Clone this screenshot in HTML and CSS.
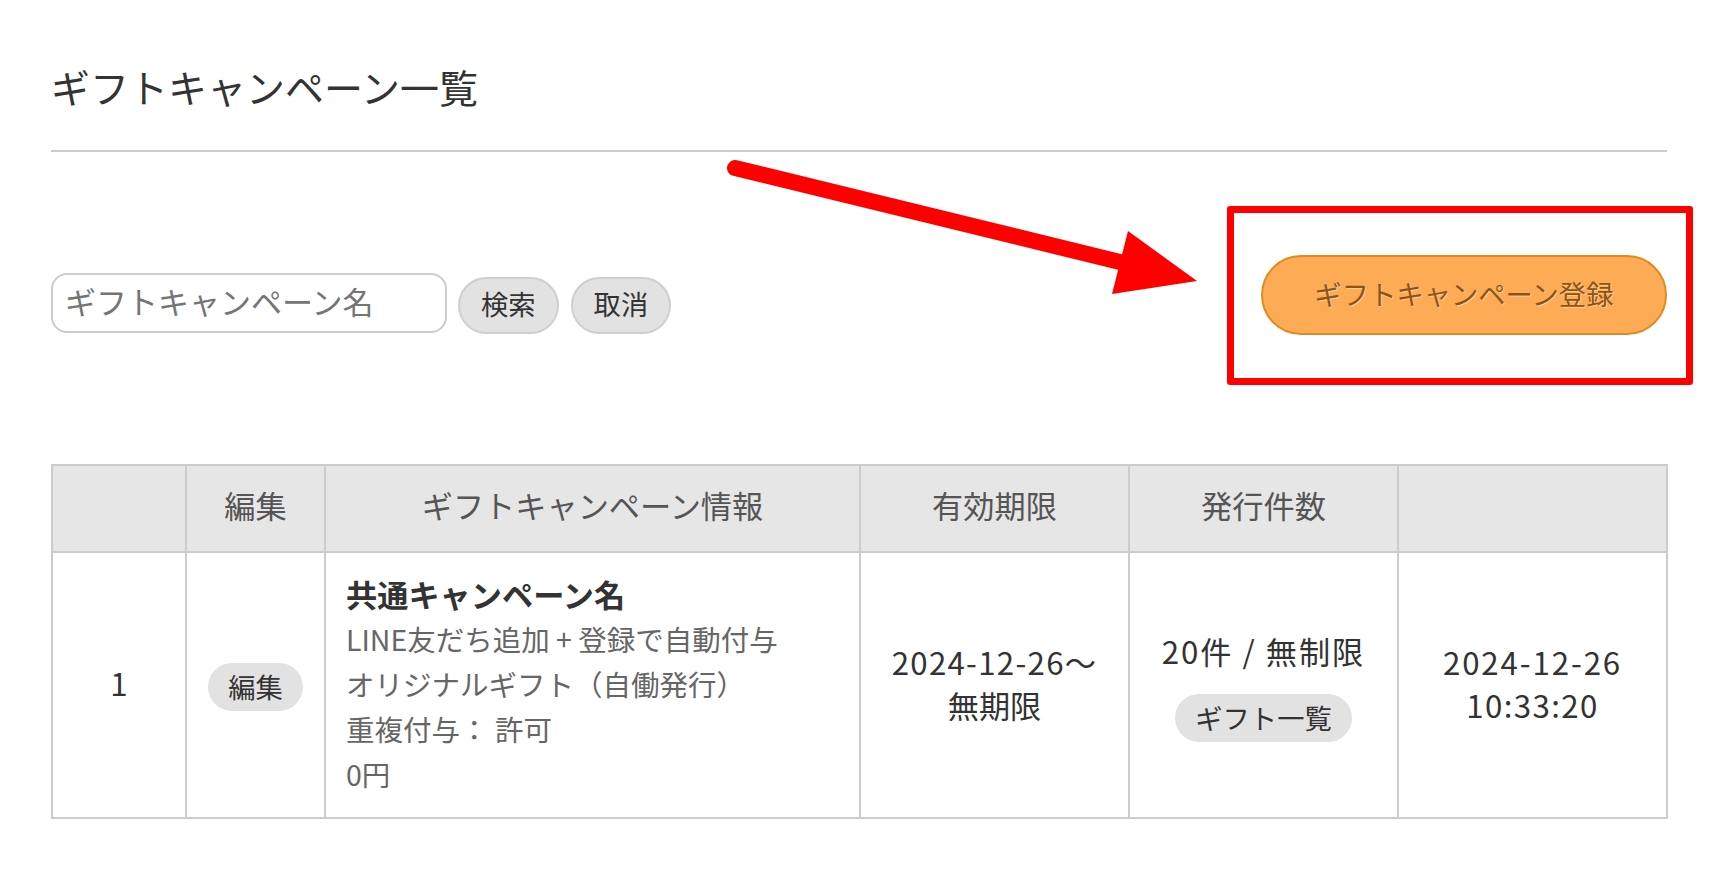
FILE: index.html
```html
<!DOCTYPE html>
<html lang="ja">
<head>
<meta charset="utf-8">
<title>ギフトキャンペーン一覧</title>
<link rel="stylesheet" href="styles.css">
</head>
<body>
<div class="page">
  <h1 class="title">ギフトキャンペーン一覧</h1>
  <div class="toolbar">
    <form class="search">
      <input class="search-input" type="text" placeholder="ギフトキャンペーン名">
      <button class="btn" type="button">検索</button>
      <button class="btn" type="button">取消</button>
    </form>
    <button class="btn-primary" type="button">ギフトキャンペーン登録</button>
  </div>
  <table class="list">
    <colgroup>
      <col class="c-no"><col class="c-edit"><col class="c-info"><col class="c-term"><col class="c-count"><col class="c-date">
    </colgroup>
    <thead>
      <tr>
        <th></th>
        <th>編集</th>
        <th>ギフトキャンペーン情報</th>
        <th>有効期限</th>
        <th>発行件数</th>
        <th></th>
      </tr>
    </thead>
    <tbody>
      <tr>
        <td class="num">1</td>
        <td class="center action-cell"><button class="btn-sm" type="button">編集</button></td>
        <td class="info">
          <div class="info-name">共通キャンペーン名</div>
          <div class="info-line">LINE友だち追加 + 登録で自動付与</div>
          <div class="info-line">オリジナルギフト（自働発行）</div>
          <div class="info-line">重複付与： 許可</div>
          <div class="info-line">0円</div>
        </td>
        <td class="center dark dates"><span class="sp-term">2024-12-26〜</span><br>無期限</td>
        <td class="center dark action-cell">
          <div class="sp-count">20件 / 無制限</div>
          <div class="sub-action"><button class="btn-sm" type="button">ギフト一覧</button></div>
        </td>
        <td class="center dark dates"><span class="sp-date">2024-12-26</span><br><span class="sp-time">10:33:20</span></td>
      </tr>
    </tbody>
  </table>
</div>
<div class="annot-box"></div>
<svg class="annot-arrow" width="490" height="160" viewBox="0 0 490 160">
  <line x1="15" y1="18" x2="400" y2="112" stroke="#ff0000" stroke-width="16" stroke-linecap="round"/>
  <polygon points="408,81 392,144 477,131" fill="#ff0000"/>
</svg>
</body>
</html>
```
FILE: styles.css
```css
html, body {
  margin: 0;
  padding: 0;
  background: #ffffff;
}

body {
  font-family: "Noto Sans CJK JP", "Noto Sans", sans-serif;
  color: #333333;
}

.page {
  padding: 58px 43px 0 51px;
}

.title {
  margin: 0;
  padding: 0 0 36px 0;
  font-size: 39px;
  line-height: 56px;
  font-weight: 400;
  color: #333333;
  border-bottom: 2px solid #cccccc;
}

.toolbar {
  margin-top: 103px;
  display: flex;
  justify-content: space-between;
  align-items: flex-start;
}

.search {
  margin: 18px 0 0 0;
  display: flex;
  align-items: flex-start;
  gap: 11px;
}

.search-input {
  box-sizing: border-box;
  width: 396px;
  height: 60px;
  margin: 0;
  padding: 0 12px 5px 12px;
  border: 2px solid #cccccc;
  border-radius: 16px;
  font-family: "Noto Sans CJK JP", "Noto Sans", sans-serif;
  font-size: 31px;
  color: #333333;
  background: #ffffff;
  outline: none;
}

.search-input::placeholder {
  color: #757575;
}

.btn {
  box-sizing: border-box;
  height: 57px;
  margin: 4px 0 0 0;
  padding: 0 21px 4px 21px;
  border: 2px solid #cfcfcf;
  border-radius: 29px;
  background: #e2e2e2;
  font-family: "Noto Sans CJK JP", "Noto Sans", sans-serif;
  font-size: 27.3px;
  line-height: 49px;
  color: #333333;
}

.search .btn + .btn {
  margin-left: 1px;
}

.btn-primary {
  box-sizing: border-box;
  width: 406px;
  height: 80px;
  margin: 0;
  padding: 0 0 4px 0;
  border: 2px solid #e28a20;
  border-radius: 40px;
  background: #fdab55;
  font-family: "Noto Sans CJK JP", "Noto Sans", sans-serif;
  font-size: 27.3px;
  line-height: 72px;
  color: #8f5411;
  text-shadow: 1px 1px 1px rgba(255, 255, 255, 0.45);
}

.list {
  margin-top: 129px;
  width: 1615px;
  table-layout: fixed;
  border-collapse: collapse;
  border: 2px solid #cccccc;
  font-size: 31.2px;
  line-height: 45px;
}

.c-no { width: 134px; }
.c-edit { width: 139px; }
.c-info { width: 535px; }
.c-term { width: 269px; }
.c-count { width: 269px; }
.c-date { width: 269px; }

.list th {
  height: 77px;
  padding: 0 0 8px 0;
  border: 2px solid #cccccc;
  background: #e6e6e6;
  font-weight: 400;
  color: #555555;
  text-align: center;
  vertical-align: middle;
}

.list td {
  padding: 17px 20px 22px 20px;
  border: 2px solid #cccccc;
  vertical-align: middle;
}

.list td.info {
  padding: 18px 20px 21px 20px;
}

.list td.action-cell {
  padding: 19.5px 20px;
}

.num {
  text-align: center;
  color: #333333;
}

.center {
  text-align: center;
}

.dark {
  color: #333333;
}

.dates {
  line-height: 43px;
}

.sp-term {
  letter-spacing: 1.3px;
}

.sp-date {
  letter-spacing: 1.9px;
}

.sp-time {
  letter-spacing: 1.4px;
}

.sp-count {
  letter-spacing: 2px;
}

.info {
  text-align: left;
}

.info-name {
  font-weight: 700;
  color: #333333;
}

.info-line {
  font-size: 28.5px;
  color: #666666;
}

.btn-sm {
  box-sizing: border-box;
  height: 48px;
  margin: 0;
  padding: 0 20px 2px 20px;
  border: none;
  border-radius: 24px;
  background: #e2e2e2;
  font-family: "Noto Sans CJK JP", "Noto Sans", sans-serif;
  font-size: 27.3px;
  line-height: 46px;
  color: #333333;
  vertical-align: middle;
}

.sub-action {
  margin-top: 17px;
  line-height: 48px;
}

.annot-box {
  position: absolute;
  left: 1227px;
  top: 206px;
  width: 452px;
  height: 165px;
  border: 7px solid #ff0000;
  border-radius: 3px;
  pointer-events: none;
}

.annot-arrow {
  position: absolute;
  left: 720px;
  top: 150px;
  pointer-events: none;
}
```
